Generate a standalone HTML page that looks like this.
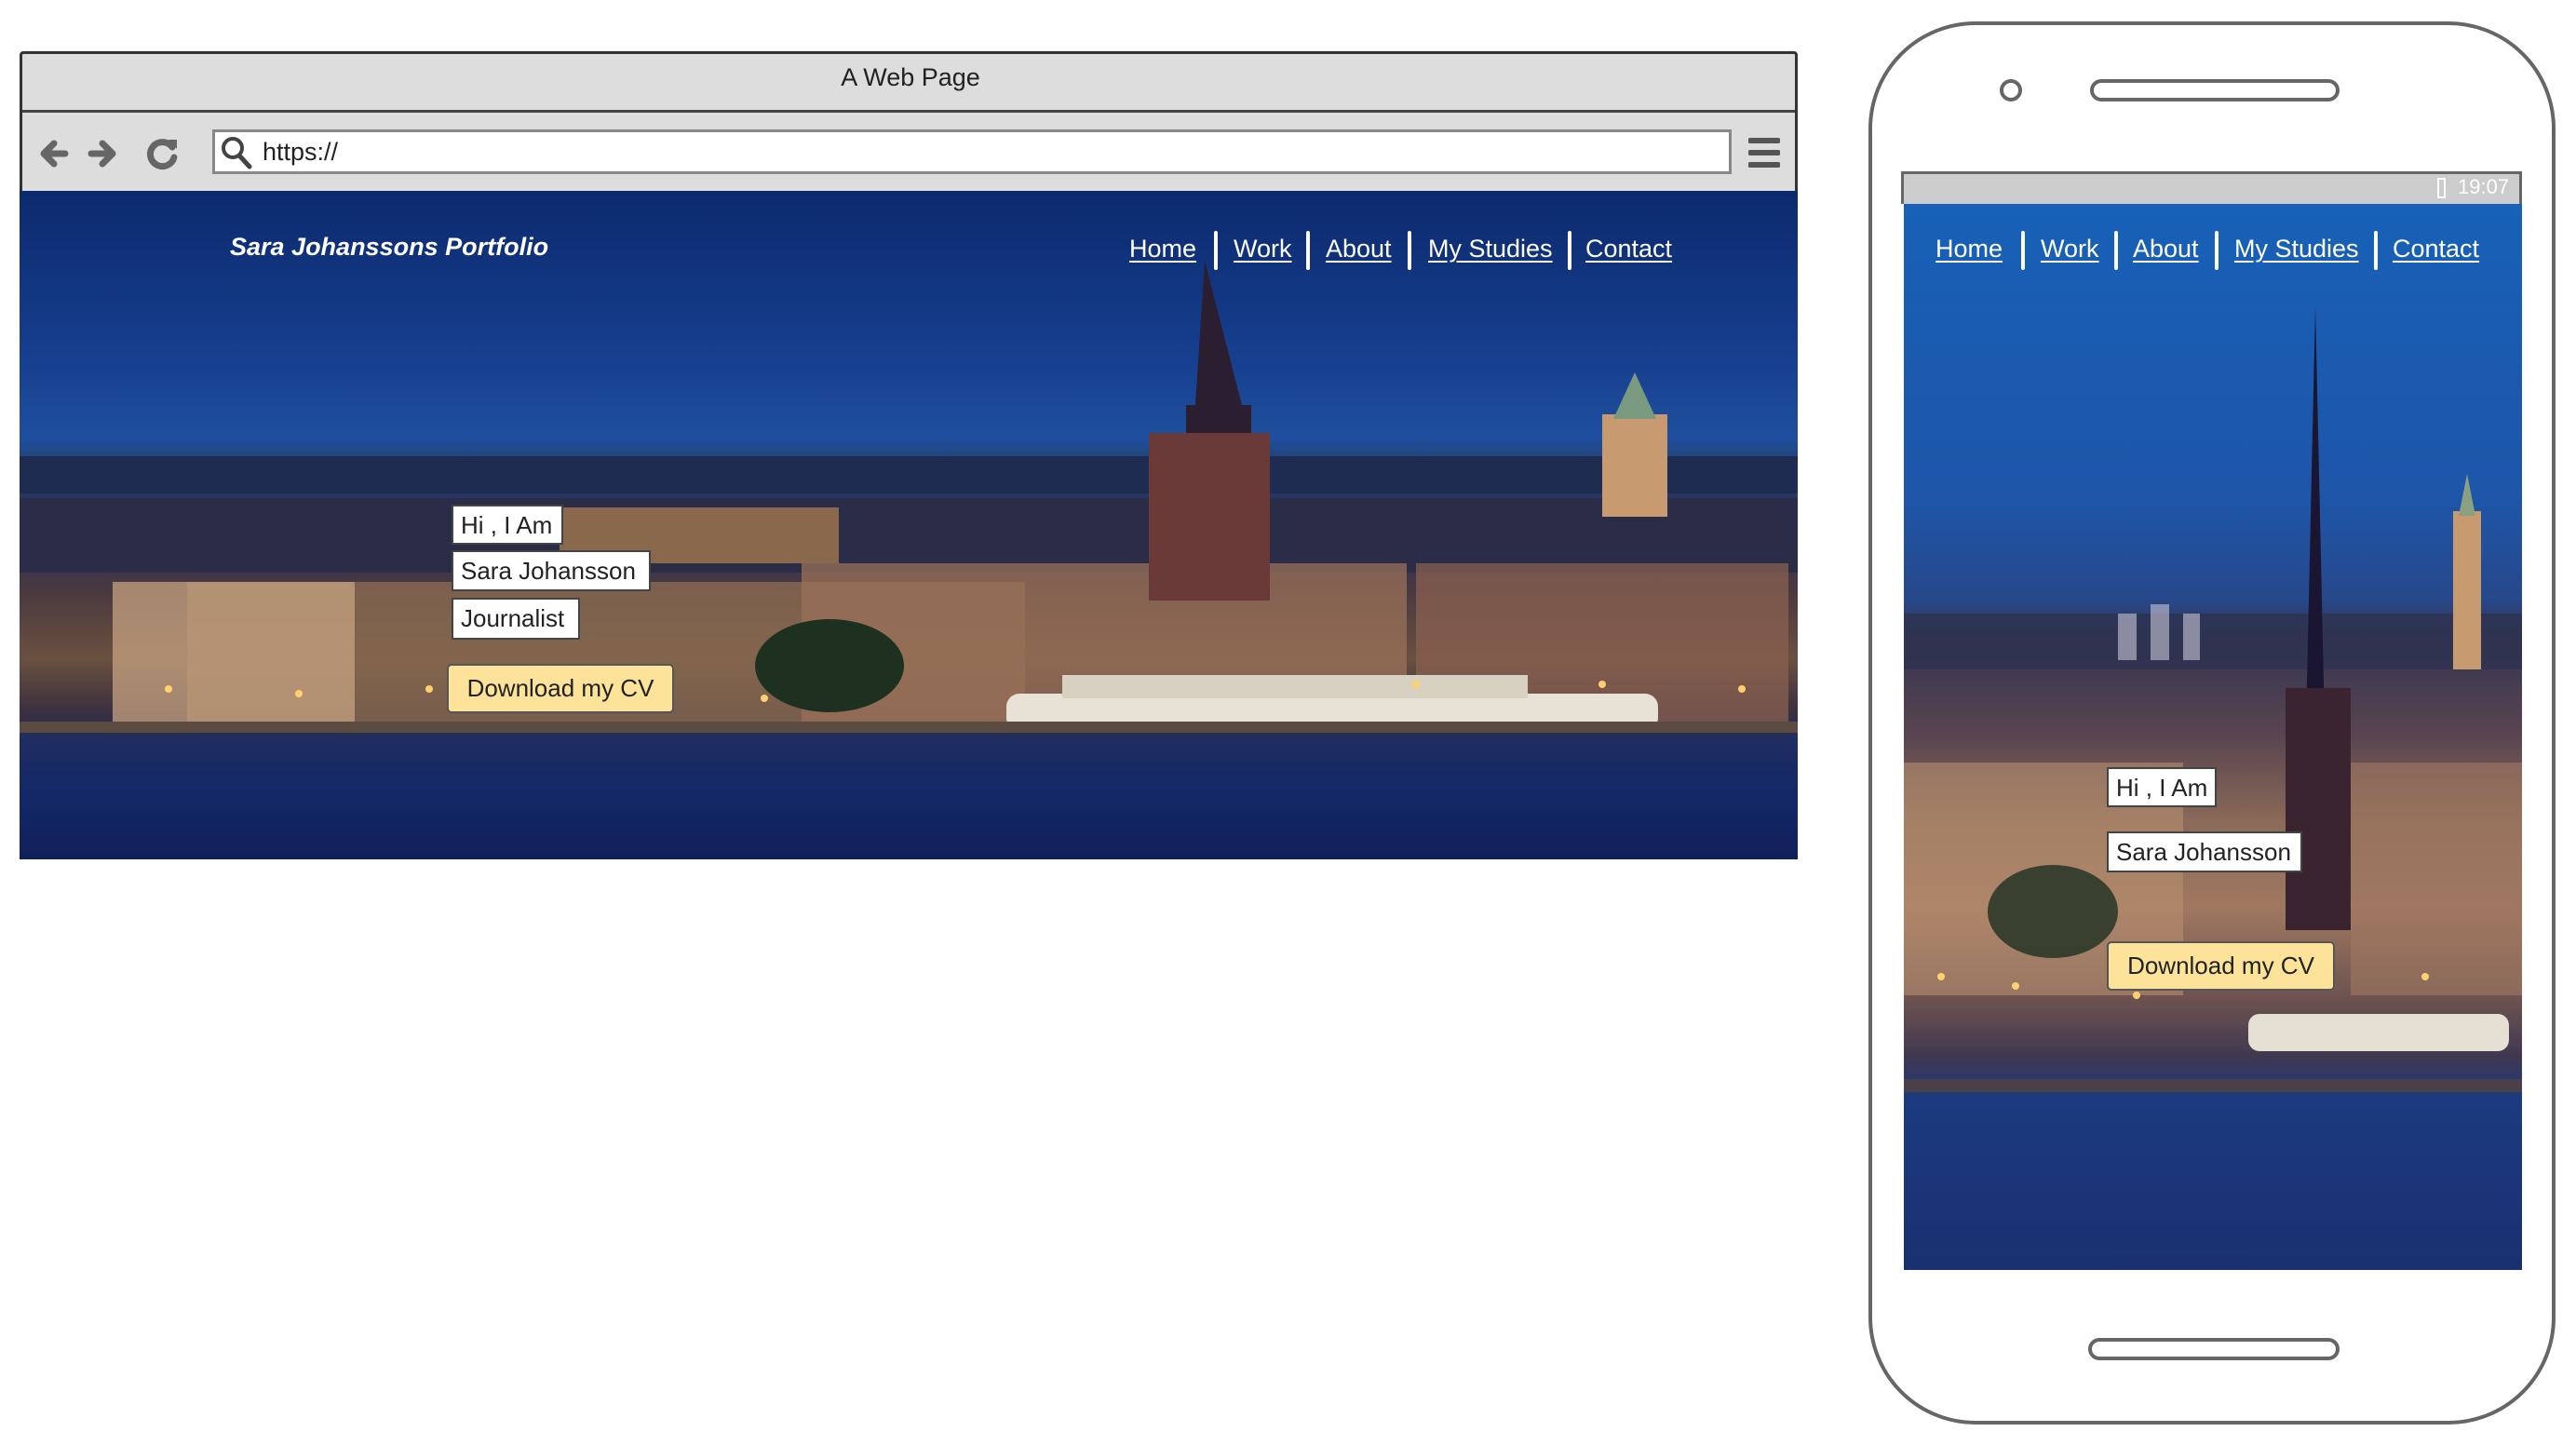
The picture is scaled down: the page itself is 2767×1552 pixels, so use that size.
<!DOCTYPE html>
<html><head><meta charset="utf-8"><style>
*{margin:0;padding:0;box-sizing:border-box}
body{width:2767px;height:1552px;background:#fff;position:relative;overflow:hidden;font-family:"Liberation Sans",sans-serif}
.abs{position:absolute}
.nav a{position:absolute;color:#fff;text-decoration:underline;font-size:27px;white-space:nowrap;text-underline-offset:4px}
.sep{position:absolute;width:4px;height:42px;background:#fff;border-radius:2px}
.box{position:absolute;background:#fff;border:2px solid #444;font-size:26px;color:#222;padding:0 8px;line-height:40px;white-space:nowrap}
.cv{position:absolute;background:#fde39a;border:2px solid #555;border-radius:5px;font-size:26px;color:#222;text-align:center}
</style></head><body>

<!-- Browser -->
<div class="abs" style="left:21px;top:55px;width:1910px;height:868px;border:3px solid #333;border-radius:4px 4px 0 0;background:#ddd"></div>
<div class="abs" style="left:24px;top:118px;width:1904px;height:3px;background:#444"></div>
<div class="abs" style="left:0;width:1956px;top:68px;text-align:center;font-size:27px;color:#222">A Web Page</div>
<svg class="abs" style="left:40px;top:145px" width="160" height="40" viewBox="0 0 160 40">
<path d="M30 20H8M18 9L7 20l11 11" stroke="#666" stroke-width="7" fill="none" stroke-linecap="round" stroke-linejoin="round"/>
<path d="M58 20h22M70 9l11 11-11 11" stroke="#666" stroke-width="7" fill="none" stroke-linecap="round" stroke-linejoin="round"/>
<path d="M145 13a13 13 0 1 0 2 11" stroke="#666" stroke-width="7" fill="none" stroke-linecap="round"/>
<path d="M141 5l9 0 0 10z" fill="#666"/>
</svg>
<div class="abs" style="left:228px;top:139px;width:1632px;height:48px;background:#fff;border:3px solid #888"></div>
<svg class="abs" style="left:236px;top:145px" width="36" height="38"><circle cx="14" cy="14" r="10" stroke="#444" stroke-width="4" fill="none"/><path d="M21 22l11 12" stroke="#444" stroke-width="5" stroke-linecap="round"/></svg>
<div class="abs" style="left:282px;top:148px;font-size:27px;color:#222">https://</div>
<svg class="abs" style="left:1878px;top:146px" width="34" height="36"><path d="M2 5h30M2 18h30M2 31h30" stroke="#555" stroke-width="6" stroke-linecap="round"/></svg>

<!-- desktop scene -->
<div class="abs" style="left:21px;top:205px;width:1910px;height:718px;overflow:hidden;background:linear-gradient(#0c2a6e 0%,#163f8e 25%,#1f4f9e 37%,#26406e 41%,#2a2f55 50%,#4a3a40 60%,#6a5040 70%,#3a3040 78%,#1f2e60 82%,#142868 90%,#10205a 100%)">
<svg width="1910" height="718" style="position:absolute;left:0;top:0">
<rect x="0" y="285" width="1910" height="40" fill="#1e2c52"/>
<rect x="0" y="330" width="1910" height="80" fill="#2a2c48"/>
<rect x="180" y="420" width="900" height="150" fill="#8a6a50" opacity=".8"/>
<rect x="100" y="420" width="260" height="150" fill="#c6a280" opacity=".75"/>
<rect x="840" y="400" width="650" height="170" fill="#9a7058" opacity=".75"/>
<rect x="1500" y="400" width="400" height="170" fill="#8a6050" opacity=".75"/>
<rect x="580" y="340" width="300" height="60" fill="#d89a50" opacity=".55"/>
<polygon points="1273,75 1263,230 1253,230 1253,430 1323,430 1323,230 1313,230" fill="#2a1e30"/>
<rect x="1213" y="260" width="130" height="180" fill="#6a3a38"/>
<rect x="1700" y="240" width="70" height="110" fill="#c89a70"/>
<polygon points="1735,195 1712,245 1758,245" fill="#7a9a80"/>
<rect x="1060" y="540" width="700" height="40" rx="14" fill="#e8e2d6"/>
<rect x="1120" y="520" width="500" height="25" fill="#d8d0c0"/>
<ellipse cx="870" cy="510" rx="80" ry="50" fill="#1e3020"/>
<rect x="0" y="570" width="1910" height="12" fill="#5a4a40"/>
<g fill="#ffd070"><circle cx="160" cy="535" r="4"/><circle cx="300" cy="540" r="4"/><circle cx="440" cy="535" r="4"/><circle cx="620" cy="545" r="4"/><circle cx="800" cy="545" r="4"/><circle cx="1500" cy="530" r="4"/><circle cx="1700" cy="530" r="4"/><circle cx="1850" cy="535" r="4"/></g>
</svg></div>
<div class="abs" style="left:247px;top:250px;font-size:27px;font-weight:bold;font-style:italic;color:#fff">Sara Johanssons Portfolio</div>
<div class="nav">
<a style="left:1213px;top:252px">Home</a><div class="sep" style="left:1304px;top:248px"></div>
<a style="left:1325px;top:252px">Work</a><div class="sep" style="left:1403px;top:248px"></div>
<a style="left:1424px;top:252px">About</a><div class="sep" style="left:1512px;top:248px"></div>
<a style="left:1534px;top:252px">My Studies</a><div class="sep" style="left:1684px;top:248px"></div>
<a style="left:1703px;top:252px">Contact</a>
</div>
<div class="box" style="left:485px;top:542px;width:120px;height:43px">Hi , I Am</div>
<div class="box" style="left:485px;top:591px;width:214px;height:44px">Sara Johansson</div>
<div class="box" style="left:485px;top:642px;width:138px;height:45px">Journalist</div>
<div class="cv" style="left:480px;top:713px;width:244px;height:53px;line-height:49px">Download my CV</div>

<!-- phone -->
<div class="abs" style="left:2007px;top:23px;width:738px;height:1507px;border:4px solid #666;border-radius:115px"></div>
<div class="abs" style="left:2148px;top:85px;width:24px;height:24px;border:4px solid #666;border-radius:50%"></div>
<div class="abs" style="left:2245px;top:85px;width:268px;height:24px;border:4px solid #666;border-radius:12px"></div>
<div class="abs" style="left:2243px;top:1437px;width:270px;height:24px;border:4px solid #666;border-radius:12px"></div>
<div class="abs" style="left:2042px;top:184px;width:667px;height:35px;background:#ccc;border:3px solid #666;border-bottom:none"></div>
<div class="abs" style="left:2640px;top:188px;font-size:22px;color:#fff">19:07</div>
<div class="abs" style="left:2618px;top:191px;width:9px;height:22px;border:2px solid #fff"></div>
<div class="abs" style="left:2045px;top:219px;width:664px;height:1145px;overflow:hidden;background:linear-gradient(#1761b8 0%,#1e55a8 28%,#27488a 37%,#343650 41%,#5a4550 50%,#8a6a58 58%,#a07860 66%,#6a5050 75%,#403850 80%,#1c3a80 84%,#1a3070 100%)">
<svg width="664" height="1145" style="position:absolute;left:0;top:0">
<rect x="0" y="440" width="664" height="60" fill="#2e3250" opacity=".8"/>
<rect x="230" y="440" width="20" height="50" fill="#c8c8d8" opacity=".6"/>
<rect x="265" y="430" width="20" height="60" fill="#c8c8d8" opacity=".6"/>
<rect x="300" y="440" width="18" height="50" fill="#c8c8d8" opacity=".6"/>
<polygon points="442,110 432,560 452,560" fill="#1a1530"/>
<rect x="410" y="520" width="70" height="260" fill="#3a2430"/>
<rect x="590" y="330" width="30" height="170" fill="#c89a70"/>
<polygon points="605,290 596,335 614,335" fill="#8aa080"/>
<rect x="0" y="600" width="300" height="250" fill="#b89070" opacity=".6"/>
<rect x="480" y="600" width="184" height="250" fill="#a07860" opacity=".6"/>
<ellipse cx="160" cy="760" rx="70" ry="50" fill="#1e3020" opacity=".8"/>
<rect x="370" y="870" width="280" height="40" rx="12" fill="#e6e0d4"/>
<rect x="0" y="940" width="664" height="14" fill="#4a4048"/>
<g fill="#ffd070"><circle cx="40" cy="830" r="4"/><circle cx="120" cy="840" r="4"/><circle cx="250" cy="850" r="4"/><circle cx="560" cy="830" r="4"/></g>
</svg></div>
<div class="nav">
<a style="left:2079px;top:252px">Home</a><div class="sep" style="left:2171px;top:248px"></div>
<a style="left:2192px;top:252px">Work</a><div class="sep" style="left:2271px;top:248px"></div>
<a style="left:2291px;top:252px">About</a><div class="sep" style="left:2379px;top:248px"></div>
<a style="left:2400px;top:252px">My Studies</a><div class="sep" style="left:2550px;top:248px"></div>
<a style="left:2570px;top:252px">Contact</a>
</div>
<div class="box" style="left:2263px;top:824px;width:118px;height:43px">Hi , I Am</div>
<div class="box" style="left:2263px;top:893px;width:210px;height:44px">Sara Johansson</div>
<div class="cv" style="left:2263px;top:1011px;width:245px;height:53px;line-height:49px">Download my CV</div>
</body></html>
